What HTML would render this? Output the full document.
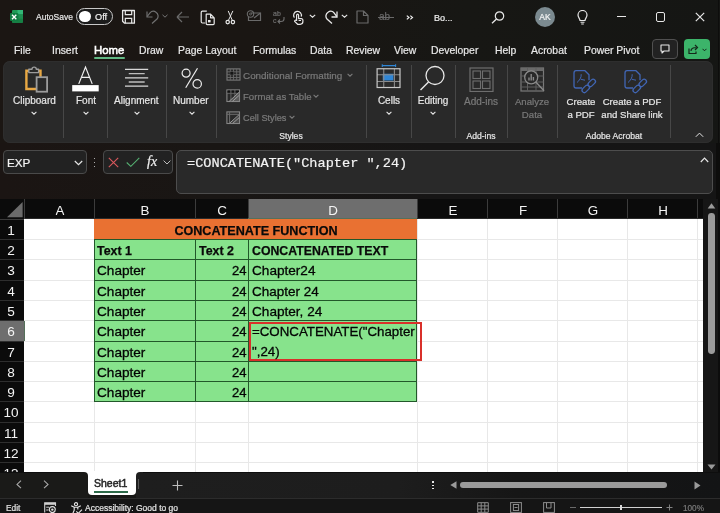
<!DOCTYPE html>
<html><head><meta charset="utf-8">
<style>
*{margin:0;padding:0;box-sizing:border-box}
html,body{width:720px;height:513px;overflow:hidden;background:#171715;font-family:"Liberation Sans",sans-serif;color:#fff}
.a{position:absolute}
.t{position:absolute;white-space:nowrap;line-height:1;will-change:transform;-webkit-text-stroke:0.2px currentColor}
</style></head><body>
<div class="a" style="left:0px;top:0px;width:720px;height:61px;background:linear-gradient(90deg,#1b1613 0%,#1a1613 35%,#171714 65%,#151614 100%)"></div>
<svg class="a" style="left:9px;top:9px" width="16" height="16" viewBox="0 0 16 16" fill="none"><rect x="3" y="1" width="11" height="12.7" rx="1" fill="#1f9a56"/>
<rect x="8.5" y="1" width="5.5" height="4.2" fill="#33b877"/>
<rect x="8.5" y="5.2" width="5.5" height="4.2" fill="#1e8e50"/>
<rect x="3" y="9.4" width="11" height="4.3" rx="1" fill="#168044"/>
<rect x="1" y="3.9" width="8.4" height="8.1" rx="1" fill="#107c41"/>
<path d="M3 5.8 L7.3 10.2 M7.3 5.8 L3 10.2" stroke="#ffffff" stroke-width="1.3"/></svg>
<div class="t" style="left:36px;top:13px;font-size:8.5px;color:#e6e6e6;font-weight:normal;">AutoSave</div>
<div class="a" style="left:76px;top:8px;width:36.5px;height:17.4px;border:1.5px solid #c8c8c8;border-radius:9px;background:#1c1c1c"></div>
<div class="a" style="left:79px;top:10.7px;width:11.6px;height:11.6px;background:#fff;border-radius:50%"></div>
<div class="t" style="left:95px;top:13px;font-size:9.2px;color:#f0f0f0;font-weight:normal;">Off</div>
<svg class="a" style="left:121px;top:9px" width="15" height="16" viewBox="0 0 15 16" fill="none"><path d="M1.6 1.5 H13.4 V14.2 H3.6 L1.6 12.2 Z" stroke="#e8e8e8" stroke-width="1.3" stroke-linejoin="round"/>
<path d="M4.3 1.5 V5.6 H10.7 V1.5" stroke="#e8e8e8" stroke-width="1.2"/>
<path d="M4.3 14.2 V9.4 H10.7 V14.2" stroke="#e8e8e8" stroke-width="1.2"/></svg>
<svg class="a" style="left:145px;top:10px" width="15" height="14" viewBox="0 0 15 14" fill="none"><path d="M7 13.5 L12 9 A4.5 4.5 0 0 0 11 2.3 A4.5 4.5 0 0 0 5 2.8 L2.2 6.5" stroke="#707070" stroke-width="1.2" fill="none"/>
<path d="M2 1.5 V7 H7.5" stroke="#707070" stroke-width="1.2"/></svg>
<svg class="a" style="left:162px;top:14px" width="6" height="4" viewBox="0 0 6 4" fill="none"><path d="M0.5 0.8 L3 3.2 L5.5 0.8" stroke="#777" stroke-width="1"/></svg>
<svg class="a" style="left:176px;top:11px" width="14" height="12" viewBox="0 0 14 12" fill="none"><path d="M1 6 H13 M1 6 L6 1 M1 6 L6 11" stroke="#6a6a6a" stroke-width="1.2"/></svg>
<svg class="a" style="left:199.5px;top:9.5px" width="16" height="16" viewBox="0 0 16 16" fill="none"><path d="M6.8 1.2 H2.4 Q1.2 1.2 1.2 2.4 V11.8 Q1.2 13 2.4 13 H5.2" stroke="#e8e8e8" stroke-width="1.2"/>
<path d="M6.2 4.2 H10.6 L14.2 7.8 V13.6 Q14.2 14.6 13.2 14.6 H7.2 Q6.2 14.6 6.2 13.6 Z M10.6 4.2 V7.8 H14.2" stroke="#e8e8e8" stroke-width="1.2" stroke-linejoin="round"/>
<rect x="8" y="10" width="2.6" height="2.4" fill="#e8e8e8"/></svg>
<svg class="a" style="left:224px;top:9px" width="12" height="16" viewBox="0 0 12 16" fill="none"><path d="M4.2 1.9 L8.3 11.4 M8.9 1.9 L4.4 11.4" stroke="#e8e8e8" stroke-width="1"/>
<circle cx="3.7" cy="13.1" r="1.7" stroke="#e8e8e8" stroke-width="1.2"/><circle cx="8.9" cy="13.1" r="1.7" stroke="#e8e8e8" stroke-width="1.2"/></svg>
<svg class="a" style="left:246px;top:10px" width="16" height="12" viewBox="0 0 16 12" fill="none"><path d="M5 3 H14.5 V10.5 H2.5 V7" stroke="#6a6a6a" stroke-width="1.2"/>
<path d="M8 8 L14.5 3" stroke="#6a6a6a" stroke-width="1.1"/>
<circle cx="4.5" cy="4" r="3.2" stroke="#6a6a6a" stroke-width="1.1"/><circle cx="4.5" cy="4" r="1" stroke="#6a6a6a" stroke-width="0.9"/></svg>
<div class="t" style="left:272.5px;top:10px;font-size:7px;color:#6e6e6e;font-weight:normal;">ab</div>
<div class="t" style="left:272.5px;top:17px;font-size:7px;color:#6e6e6e;font-weight:normal;">c</div>
<svg class="a" style="left:277px;top:16px" width="8" height="8" viewBox="0 0 8 8" fill="none"><path d="M7 1 V3 C7 5 5.5 5.5 4 5.5 H1 M3 3.5 L1 5.5 L3 7.5" stroke="#6e6e6e" stroke-width="1.1"/></svg>
<svg class="a" style="left:292px;top:9.5px" width="12" height="15" viewBox="0 0 12 15" fill="none"><path d="M2.4 7.6 A3.9 3.9 0 1 1 9.2 6.6" stroke="#e8e8e8" stroke-width="1.2"/>
<path d="M4.6 11 V5.2 A1 1 0 0 1 6.6 5.2 V8.6 H9.3 A1.6 1.6 0 0 1 10.9 10.2 V11.6 A2.7 2.7 0 0 1 8.2 14.3 H5.6 L2.6 11.4 A1.1 1.1 0 0 1 4.6 10.6" stroke="#e8e8e8" stroke-width="1.2" stroke-linejoin="round"/>
<path d="M6.6 10.5 H9" stroke="#e8e8e8" stroke-width="1"/></svg>
<svg class="a" style="left:309px;top:14px" width="7" height="4" viewBox="0 0 7 4" fill="none"><path d="M0.8 0.8 L3.5 3.2 L6.2 0.8" stroke="#e8e8e8" stroke-width="1.1"/></svg>
<svg class="a" style="left:324px;top:10px" width="15" height="14" viewBox="0 0 15 14" fill="none"><path d="M8 13.5 L3 9 A4.5 4.5 0 0 1 4 2.3 A4.5 4.5 0 0 1 10 2.8 L12.8 6.5" stroke="#e8e8e8" stroke-width="1.3" fill="none"/>
<path d="M13 1.5 V7 H7.5" stroke="#e8e8e8" stroke-width="1.3"/></svg>
<svg class="a" style="left:341px;top:14px" width="7" height="4" viewBox="0 0 7 4" fill="none"><path d="M0.8 0.8 L3.5 3.2 L6.2 0.8" stroke="#e8e8e8" stroke-width="1.1"/></svg>
<svg class="a" style="left:356px;top:10px" width="13" height="14" viewBox="0 0 13 14" fill="none"><path d="M1 1 H7.5 L12 5.5 V13 H1 Z M7.5 1 V5.5 H12" stroke="#6a6a6a" stroke-width="1.2" stroke-linejoin="round"/></svg>
<div class="t" style="left:379px;top:12px;font-size:10px;color:#6a6a6a;font-weight:normal;">ab</div>
<div class="a" style="left:378px;top:16.5px;width:16px;height:1px;background:#6a6a6a"></div>
<svg class="a" style="left:406px;top:15px" width="8" height="5" viewBox="0 0 8 5" fill="none"><path d="M0.8 0.6 L3 2.5 L0.8 4.4 M4.3 0.6 L6.5 2.5 L4.3 4.4" stroke="#eeeeee" stroke-width="1.2"/></svg>
<div class="t" style="left:434px;top:14px;font-size:9px;color:#f0f0f0;font-weight:normal;">Bo...</div>
<svg class="a" style="left:491px;top:11px" width="14" height="13" viewBox="0 0 14 13" fill="none"><circle cx="8.5" cy="5" r="4.2" stroke="#e8e8e8" stroke-width="1.2"/><path d="M5.5 8 L1 12.3" stroke="#e8e8e8" stroke-width="1.3"/></svg>
<div class="a" style="left:534.5px;top:7px;width:20px;height:20px;background:#7b8a90;border-radius:50%"></div>
<div class="t" style="left:544.5px;transform:translateX(-50%);top:13px;font-size:8.5px;color:#f4f4f4;font-weight:normal;">AK</div>
<svg class="a" style="left:577px;top:10px" width="11" height="15" viewBox="0 0 11 15" fill="none"><path d="M3 10.5 C3 8.5 1 7.5 1 5 A4.5 4.5 0 0 1 10 5 C10 7.5 8 8.5 8 10.5 Z" stroke="#e8e8e8" stroke-width="1.2"/><path d="M3.5 12.3 H7.5 M4.2 14 H6.8" stroke="#e8e8e8" stroke-width="1.1"/></svg>
<div class="a" style="left:616.5px;top:16.3px;width:9px;height:1.2px;background:#e8e8e8"></div>
<div class="a" style="left:655.5px;top:12.2px;width:9.5px;height:9.5px;border:1.2px solid #e8e8e8;border-radius:2px"></div>
<svg class="a" style="left:695px;top:12px" width="10" height="10" viewBox="0 0 10 10" fill="none"><path d="M0.8 0.8 L9.2 9.2 M9.2 0.8 L0.8 9.2" stroke="#e8e8e8" stroke-width="1.2"/></svg>
<div class="t" style="left:14.4px;top:46px;font-size:10.4px;color:#e8e8e8;font-weight:normal;">File</div>
<div class="t" style="left:52.2px;top:46px;font-size:10.4px;color:#e8e8e8;font-weight:normal;">Insert</div>
<div class="t" style="left:138.5px;top:46px;font-size:10.4px;color:#e8e8e8;font-weight:normal;">Draw</div>
<div class="t" style="left:178px;top:46px;font-size:10.4px;color:#e8e8e8;font-weight:normal;">Page Layout</div>
<div class="t" style="left:252.5px;top:46px;font-size:10.4px;color:#e8e8e8;font-weight:normal;">Formulas</div>
<div class="t" style="left:310px;top:46px;font-size:10.4px;color:#e8e8e8;font-weight:normal;">Data</div>
<div class="t" style="left:346px;top:46px;font-size:10.4px;color:#e8e8e8;font-weight:normal;">Review</div>
<div class="t" style="left:393.7px;top:46px;font-size:10.4px;color:#e8e8e8;font-weight:normal;">View</div>
<div class="t" style="left:431.2px;top:46px;font-size:10.4px;color:#e8e8e8;font-weight:normal;">Developer</div>
<div class="t" style="left:495px;top:46px;font-size:10.4px;color:#e8e8e8;font-weight:normal;">Help</div>
<div class="t" style="left:531px;top:46px;font-size:10.4px;color:#e8e8e8;font-weight:normal;">Acrobat</div>
<div class="t" style="left:583.7px;top:46px;font-size:10.4px;color:#e8e8e8;font-weight:normal;">Power Pivot</div>
<div class="t" style="left:93.8px;top:45px;font-size:11.4px;color:#ffffff;font-weight:normal;-webkit-text-stroke:0.55px #ffffff;">Home</div>
<div class="a" style="left:93.8px;top:56.5px;width:31px;height:2px;background:#62b884;border-radius:1px"></div>
<div class="a" style="left:652px;top:38.9px;width:25.6px;height:20.1px;border:1px solid #505050;border-radius:4px;background:#222"></div>
<svg class="a" style="left:659.5px;top:43.5px" width="10" height="10" viewBox="0 0 10 10" fill="none"><path d="M1 1 H9 V7 H4 L2 9 V7 H1 Z" stroke="#e8e8e8" stroke-width="1.1" stroke-linejoin="round"/></svg>
<div class="a" style="left:683.9px;top:38.9px;width:26.1px;height:20.1px;background:#3cb46a;border-radius:4px"></div>
<svg class="a" style="left:687.5px;top:44px" width="11" height="10" viewBox="0 0 11 10" fill="none"><path d="M1 4.5 V9.5 H8 V7.5" stroke="#15261a" stroke-width="1.2"/><path d="M3 7 C3 4.5 5 3.5 8.5 3.5 M7 1 L9.5 3.5 L7 6" stroke="#15261a" stroke-width="1.2"/></svg>
<svg class="a" style="left:702px;top:47.5px" width="5" height="4" viewBox="0 0 5 4" fill="none"><path d="M0.5 0.8 L2.5 2.8 L4.5 0.8" stroke="#15261a" stroke-width="1"/></svg>
<div class="a" style="left:0px;top:61px;width:720px;height:82px;background:linear-gradient(90deg,#1b1613 0%,#1a1613 35%,#171714 65%,#151614 100%)"></div>
<div class="a" style="left:3px;top:61px;width:710px;height:82px;background:#292929;border-radius:7px;box-shadow:inset 0 0 0 1px #2e2e2e"></div>
<div class="a" style="left:63px;top:65px;width:1px;height:73px;background:#474747"></div>
<div class="a" style="left:107px;top:65px;width:1px;height:73px;background:#474747"></div>
<div class="a" style="left:166px;top:65px;width:1px;height:73px;background:#474747"></div>
<div class="a" style="left:216px;top:65px;width:1px;height:73px;background:#474747"></div>
<div class="a" style="left:366px;top:65px;width:1px;height:73px;background:#474747"></div>
<div class="a" style="left:411px;top:65px;width:1px;height:73px;background:#474747"></div>
<div class="a" style="left:455px;top:65px;width:1px;height:73px;background:#474747"></div>
<div class="a" style="left:507px;top:65px;width:1px;height:73px;background:#474747"></div>
<div class="a" style="left:557px;top:65px;width:1px;height:73px;background:#474747"></div>
<div class="a" style="left:670px;top:65px;width:1px;height:73px;background:#474747"></div>
<svg class="a" style="left:24px;top:65px" width="26" height="28" viewBox="0 0 26 28" fill="none"><path d="M2.4 5.8 H16.5 V24 H2.4 Z" stroke="#e8a844" stroke-width="2.4"/>
<path d="M4.8 7.6 V4.3 H8 A2 2 0 0 1 12.3 4.3 H14.6 V7.6 Z" stroke="#9c9c9c" stroke-width="1.4" fill="#292929" stroke-linejoin="round"/>
<rect x="12.6" y="12.2" width="10.5" height="14.5" fill="#292929" stroke="#9c9c9c" stroke-width="1.8"/></svg>
<div class="t" style="left:13.2px;top:96px;font-size:10px;color:#e6e6e6;font-weight:normal;">Clipboard</div>
<svg class="a" style="left:31px;top:110.5px" width="6" height="4" viewBox="0 0 6 4" fill="none"><path d="M0.6 0.8 L3 3.2 L5.4 0.8" stroke="#e6e6e6" stroke-width="1.1"/></svg>
<svg class="a" style="left:71px;top:65px" width="29" height="27" viewBox="0 0 29 27" fill="none"><path d="M7.75 18.9 L14.5 2 L21.2 18.9 M10.9 12.3 H18.4" stroke="#f0f0f0" stroke-width="1.2"/>
<rect x="1.2" y="20.1" width="26.5" height="6.3" fill="#ffffff"/></svg>
<div class="t" style="left:75.7px;top:96px;font-size:10px;color:#e6e6e6;font-weight:normal;">Font</div>
<svg class="a" style="left:82.5px;top:110.5px" width="6" height="4" viewBox="0 0 6 4" fill="none"><path d="M0.6 0.8 L3 3.2 L5.4 0.8" stroke="#e6e6e6" stroke-width="1.1"/></svg>
<svg class="a" style="left:124px;top:67px" width="26" height="22" viewBox="0 0 26 22" fill="none"><path d="M1 2.4 H24.2 M1 10.8 H24.2 M1 19.1 H24.2" stroke="#d8d8d8" stroke-width="1.3"/><path d="M4.75 6.6 H20.7 M4.75 15 H20.7" stroke="#bdbdbd" stroke-width="1.3"/></svg>
<div class="t" style="left:114.3px;top:96px;font-size:10px;color:#e6e6e6;font-weight:normal;">Alignment</div>
<svg class="a" style="left:134px;top:110.5px" width="6" height="4" viewBox="0 0 6 4" fill="none"><path d="M0.6 0.8 L3 3.2 L5.4 0.8" stroke="#e6e6e6" stroke-width="1.1"/></svg>
<svg class="a" style="left:180px;top:67px" width="24" height="22" viewBox="0 0 24 22" fill="none"><circle cx="6.1" cy="6.2" r="4" stroke="#eeeeee" stroke-width="1.2"/><circle cx="17.2" cy="16.9" r="4.2" stroke="#eeeeee" stroke-width="1.2"/><path d="M17.5 1.3 L5.7 20.8" stroke="#eeeeee" stroke-width="1.2"/></svg>
<div class="t" style="left:173.3px;top:96px;font-size:10px;color:#e6e6e6;font-weight:normal;">Number</div>
<svg class="a" style="left:188.5px;top:110.5px" width="6" height="4" viewBox="0 0 6 4" fill="none"><path d="M0.6 0.8 L3 3.2 L5.4 0.8" stroke="#e6e6e6" stroke-width="1.1"/></svg>
<svg class="a" style="left:225.5px;top:68px" width="15" height="13" viewBox="0 0 15 13" fill="none"><rect x="1" y="0.9" width="13" height="11.2" stroke="#7a7a7a" stroke-width="1.1"/><path d="M1 3.8 H14 M1 6.7 H14 M1 9.5 H14 M4.3 1 V12 M7.5 1 V12 M10.7 1 V12" stroke="#6a6a6a" stroke-width="0.9"/><rect x="4.3" y="3.8" width="3.2" height="2.9" fill="#151515"/></svg>
<div class="t" style="left:243.3px;top:71px;font-size:9.9px;color:#7a7a7a;font-weight:normal;">Conditional Formatting</div>
<svg class="a" style="left:346.9px;top:72.5px" width="6" height="4" viewBox="0 0 6 4" fill="none"><path d="M0.6 0.8 L3 3.2 L5.4 0.8" stroke="#7a7a7a" stroke-width="1.1"/></svg>
<svg class="a" style="left:226px;top:89px" width="15" height="14" viewBox="0 0 15 14" fill="none"><rect x="0.9" y="0.9" width="12.6" height="11.6" stroke="#858585" stroke-width="1.1"/><rect x="1.5" y="1.5" width="3" height="2.5" fill="#111"/><rect x="5.3" y="1.5" width="3.2" height="2.5" fill="#111"/><rect x="9.3" y="1.5" width="3.6" height="2.5" fill="#111"/><path d="M1 4.3 H13.5 M4.9 1 V12.5 M8.9 1 V7" stroke="#6a6a6a" stroke-width="0.9"/><path d="M3.5 12 L13 3.5 V12 Z" fill="#5a5a5a"/><path d="M3.2 12.3 L13.2 3.2 M6.5 12.3 L13.2 6.3" stroke="#9a9a9a" stroke-width="1"/></svg>
<div class="t" style="left:243.3px;top:92px;font-size:9.6px;color:#7a7a7a;font-weight:normal;">Format as Table</div>
<svg class="a" style="left:313.4px;top:94px" width="6" height="4" viewBox="0 0 6 4" fill="none"><path d="M0.6 0.8 L3 3.2 L5.4 0.8" stroke="#7a7a7a" stroke-width="1.1"/></svg>
<svg class="a" style="left:226px;top:110.5px" width="15" height="14" viewBox="0 0 15 14" fill="none"><rect x="0.9" y="0.9" width="12.6" height="11.6" stroke="#858585" stroke-width="1.1"/><path d="M1 3.3 H13.5 M3.6 1 V12.5" stroke="#6e6e6e" stroke-width="1"/><path d="M4.5 12 L13 4.5 V12 Z" fill="#4a4a4a"/><path d="M3.5 12.3 L13.2 3.6 M6.8 12.3 L13.2 6.6" stroke="#9a9a9a" stroke-width="1"/></svg>
<div class="t" style="left:243.3px;top:114px;font-size:9.2px;color:#7a7a7a;font-weight:normal;">Cell Styles</div>
<svg class="a" style="left:288.5px;top:115.2px" width="6" height="4" viewBox="0 0 6 4" fill="none"><path d="M0.6 0.8 L3 3.2 L5.4 0.8" stroke="#7a7a7a" stroke-width="1.1"/></svg>
<div class="t" style="left:291px;transform:translateX(-50%);top:132px;font-size:8.6px;color:#e6e6e6;font-weight:normal;">Styles</div>
<svg class="a" style="left:376px;top:64px" width="26" height="25" viewBox="0 0 26 25" fill="none"><rect x="6.75" y="9.75" width="10.65" height="6.75" fill="#2f86d6"/>
<path d="M1 10.75 H24 M1 17.5 H24 M7.75 4.75 V23.5 M18.4 4.75 V23.5" stroke="#8a8a8a" stroke-width="1.1"/>
<rect x="1.1" y="4.75" width="22.9" height="18.75" stroke="#c8c8c8" stroke-width="1.2"/>
<path d="M6.25 1.6 H19.6 M6.25 0.3 V2.9 M19.6 0.3 V2.9" stroke="#2f86d6" stroke-width="1.1"/></svg>
<div class="t" style="left:388.8px;transform:translateX(-50%);top:96px;font-size:10px;color:#e6e6e6;font-weight:normal;">Cells</div>
<svg class="a" style="left:385.8px;top:110.5px" width="6" height="4" viewBox="0 0 6 4" fill="none"><path d="M0.6 0.8 L3 3.2 L5.4 0.8" stroke="#e6e6e6" stroke-width="1.1"/></svg>
<svg class="a" style="left:419px;top:65px" width="27" height="26" viewBox="0 0 27 26" fill="none"><circle cx="16" cy="10.5" r="9" stroke="#e8e8e8" stroke-width="1.3"/><path d="M9.5 17 L1.5 25" stroke="#e8e8e8" stroke-width="1.5"/></svg>
<div class="t" style="left:432.5px;transform:translateX(-50%);top:96px;font-size:10px;color:#e6e6e6;font-weight:normal;">Editing</div>
<svg class="a" style="left:429.5px;top:110.5px" width="6" height="4" viewBox="0 0 6 4" fill="none"><path d="M0.6 0.8 L3 3.2 L5.4 0.8" stroke="#e6e6e6" stroke-width="1.1"/></svg>
<svg class="a" style="left:469px;top:67px" width="25" height="25" viewBox="0 0 25 25" fill="none"><rect x="1" y="1" width="23" height="23.5" stroke="#6e6e6e" stroke-width="1.2"/><rect x="4" y="4" width="7.5" height="7.5" stroke="#6e6e6e" stroke-width="1.1"/><rect x="13.5" y="4" width="7.5" height="7.5" stroke="#6e6e6e" stroke-width="1.1"/><rect x="4" y="14" width="7.5" height="7.5" stroke="#6e6e6e" stroke-width="1.1"/><rect x="13.5" y="14" width="7.5" height="7.5" stroke="#6e6e6e" stroke-width="1.1"/></svg>
<div class="t" style="left:481px;transform:translateX(-50%);top:97px;font-size:10px;color:#7a7a7a;font-weight:normal;">Add-ins</div>
<div class="t" style="left:481px;transform:translateX(-50%);top:132px;font-size:8.6px;color:#e6e6e6;font-weight:normal;">Add-ins</div>
<svg class="a" style="left:520px;top:67px" width="26" height="26" viewBox="0 0 26 26" fill="none"><rect x="1" y="1" width="22.5" height="23" stroke="#7a7a7a" stroke-width="1.2"/>
<rect x="1" y="1" width="22.5" height="3" fill="#6a6a6a"/>
<path d="M1 9 H23.5 M1 15 H23.5 M1 20 H23.5 M7.5 1 V24 M16 1 V24" stroke="#5e5e5e" stroke-width="1"/>
<circle cx="11.2" cy="10.4" r="6.5" fill="#292929" stroke="#8a8a8a" stroke-width="1.3"/>
<path d="M9 13.5 V10.5 M11.2 13.5 V7 M13.4 13.5 V10" stroke="#8a8a8a" stroke-width="1.4"/>
<path d="M15.8 15 L24 23.8" stroke="#8a8a8a" stroke-width="1.4"/></svg>
<div class="t" style="left:532px;transform:translateX(-50%);top:97px;font-size:9.6px;color:#7a7a7a;font-weight:normal;">Analyze</div>
<div class="t" style="left:532px;transform:translateX(-50%);top:110px;font-size:9.6px;color:#7a7a7a;font-weight:normal;">Data</div>
<svg class="a" style="left:572px;top:69px" width="26" height="26" viewBox="0 0 26 26" fill="none"><path d="M10 19 H4 Q2 19 2 17 V4 Q2 1.7 4 1.7 H13 L17 5.8 V11.3" stroke="#4166b4" stroke-width="1.3" stroke-linejoin="round"/>
<path d="M9.2 5.2 C9.5 8.5 7.5 11.5 5 13.5 M8.8 10.2 C10.2 10.8 11.8 10.8 13 11.2" stroke="#4166b4" stroke-width="1"/>
<rect x="9.5" y="17.6" width="8.5" height="4.6" rx="2.3" transform="rotate(-45 13.75 19.9)" stroke="#4166b4" stroke-width="1.3"/>
<rect x="15.5" y="11.6" width="8.5" height="4.6" rx="2.3" transform="rotate(-45 19.75 13.9)" stroke="#4166b4" stroke-width="1.3"/></svg>
<div class="t" style="left:581px;transform:translateX(-50%);top:97px;font-size:9.6px;color:#e6e6e6;font-weight:normal;">Create</div>
<div class="t" style="left:581px;transform:translateX(-50%);top:110px;font-size:9.6px;color:#e6e6e6;font-weight:normal;">a PDF</div>
<svg class="a" style="left:623px;top:69px" width="26" height="26" viewBox="0 0 26 26" fill="none"><path d="M10 19 H4 Q2 19 2 17 V4 Q2 1.7 4 1.7 H13 L17 5.8 V11.3" stroke="#4166b4" stroke-width="1.3" stroke-linejoin="round"/>
<path d="M9.2 5.2 C9.5 8.5 7.5 11.5 5 13.5 M8.8 10.2 C10.2 10.8 11.8 10.8 13 11.2" stroke="#4166b4" stroke-width="1"/>
<rect x="9.5" y="17.6" width="8.5" height="4.6" rx="2.3" transform="rotate(-45 13.75 19.9)" stroke="#4166b4" stroke-width="1.3"/>
<rect x="15.5" y="11.6" width="8.5" height="4.6" rx="2.3" transform="rotate(-45 19.75 13.9)" stroke="#4166b4" stroke-width="1.3"/></svg>
<div class="t" style="left:632px;transform:translateX(-50%);top:97px;font-size:9.6px;color:#e6e6e6;font-weight:normal;">Create a PDF</div>
<div class="t" style="left:632px;transform:translateX(-50%);top:110px;font-size:9.6px;color:#e6e6e6;font-weight:normal;">and Share link</div>
<div class="t" style="left:614px;transform:translateX(-50%);top:132px;font-size:8.6px;color:#e6e6e6;font-weight:normal;">Adobe Acrobat</div>
<svg class="a" style="left:694.5px;top:132px" width="9" height="6" viewBox="0 0 9 6" fill="none"><path d="M0.8 4.8 L4.5 1.1 L8.2 4.8" stroke="#e6e6e6" stroke-width="1"/></svg>
<div class="a" style="left:0px;top:143px;width:720px;height:55.5px;background:linear-gradient(90deg,#1b1513,#191614 30%,#161515 60%,#151515)"></div>
<div class="a" style="left:3px;top:150px;width:84px;height:24px;border:1px solid #4a4a4a;border-radius:4px;background:#222222"></div>
<div class="t" style="left:7px;top:157px;font-size:11.7px;color:#f4f4f4;font-weight:normal;">EXP</div>
<svg class="a" style="left:73.5px;top:159.5px" width="9" height="6" viewBox="0 0 9 6" fill="none"><path d="M0.8 1 L4.5 4.6 L8.2 1" stroke="#e6e6e6" stroke-width="1.2"/></svg>
<div class="a" style="left:93.8px;top:157.5px;width:1.6px;height:1.6px;background:#e0e0e0;border-radius:50%"></div>
<div class="a" style="left:93.8px;top:161.5px;width:1.6px;height:1.6px;background:#e0e0e0;border-radius:50%"></div>
<div class="a" style="left:93.8px;top:165.5px;width:1.6px;height:1.6px;background:#e0e0e0;border-radius:50%"></div>
<div class="a" style="left:103px;top:150px;width:70px;height:24px;border:1px solid #4a4a4a;border-radius:4px;background:#222222"></div>
<svg class="a" style="left:108px;top:156.5px" width="11" height="11" viewBox="0 0 11 11" fill="none"><path d="M0.8 0.8 L10.2 10.2 M10.2 0.8 L0.8 10.2" stroke="#d9585c" stroke-width="1.1"/></svg>
<svg class="a" style="left:126px;top:156.5px" width="14" height="10" viewBox="0 0 14 10" fill="none"><path d="M0.7 5.5 L4.8 9.3 L13.3 0.8" stroke="#55b072" stroke-width="1.1"/></svg>
<div class="t" style="left:147px;top:155px;font-size:14px;color:#f0f0f0;font-weight:normal;font-family:'Liberation Serif',serif;"><i>fx</i></div>
<svg class="a" style="left:163.3px;top:159.5px" width="8" height="5" viewBox="0 0 8 5" fill="none"><path d="M0.6 0.6 L4 4 L7.4 0.6" stroke="#bdbdbd" stroke-width="1"/></svg>
<div class="a" style="left:176px;top:150px;width:537px;height:44px;border:1px solid #4d4d4d;border-radius:5px;background:#292929"></div>
<div class="t" style="left:186.5px;top:157px;font-size:13.6px;color:#f4f4f4;font-weight:normal;font-family:'Liberation Mono',monospace;">=CONCATENATE("Chapter ",24)</div>
<svg class="a" style="left:700px;top:157px" width="9" height="6" viewBox="0 0 9 6" fill="none"><path d="M0.8 5 L4.5 1.2 L8.2 5" stroke="#e6e6e6" stroke-width="1.2"/></svg>
<div class="a" style="left:716px;top:142.5px;width:4px;height:56px;background:#0d0d0c"></div>
<div class="a" style="left:718px;top:0px;width:1px;height:142.5px;background:#0d0d0c"></div>
<div class="a" style="left:0px;top:198.5px;width:720px;height:274px;background:#0b0b0b"></div>
<div class="a" style="left:24px;top:219px;width:679px;height:253px;background:#ffffff"></div>
<div class="a" style="left:248px;top:199px;width:169px;height:20px;background:#6e6e6e"></div>
<div class="a" style="left:94px;top:199px;width:1px;height:20px;background:#3c3c3c"></div>
<div class="a" style="left:195px;top:199px;width:1px;height:20px;background:#3c3c3c"></div>
<div class="a" style="left:248px;top:199px;width:1px;height:20px;background:#3c3c3c"></div>
<div class="a" style="left:417px;top:199px;width:1px;height:20px;background:#3c3c3c"></div>
<div class="a" style="left:487px;top:199px;width:1px;height:20px;background:#3c3c3c"></div>
<div class="a" style="left:557px;top:199px;width:1px;height:20px;background:#3c3c3c"></div>
<div class="a" style="left:627px;top:199px;width:1px;height:20px;background:#3c3c3c"></div>
<div class="a" style="left:697px;top:199px;width:1px;height:20px;background:#3c3c3c"></div>
<div class="a" style="left:24px;top:218px;width:679px;height:1px;background:#2a2a2a"></div>
<div class="a" style="left:248px;top:218px;width:169px;height:1.2px;background:#56705a"></div>
<div class="t" style="left:59.5px;transform:translateX(-50%);top:204px;font-size:13.4px;color:#f4f4f4;font-weight:normal;-webkit-text-stroke:0;">A</div>
<div class="t" style="left:145.0px;transform:translateX(-50%);top:204px;font-size:13.4px;color:#f4f4f4;font-weight:normal;-webkit-text-stroke:0;">B</div>
<div class="t" style="left:222.0px;transform:translateX(-50%);top:204px;font-size:13.4px;color:#f4f4f4;font-weight:normal;-webkit-text-stroke:0;">C</div>
<div class="t" style="left:333.0px;transform:translateX(-50%);top:204px;font-size:13.4px;color:#f4f4f4;font-weight:normal;-webkit-text-stroke:0;">D</div>
<div class="t" style="left:452.5px;transform:translateX(-50%);top:204px;font-size:13.4px;color:#f4f4f4;font-weight:normal;-webkit-text-stroke:0;">E</div>
<div class="t" style="left:522.5px;transform:translateX(-50%);top:204px;font-size:13.4px;color:#f4f4f4;font-weight:normal;-webkit-text-stroke:0;">F</div>
<div class="t" style="left:592.5px;transform:translateX(-50%);top:204px;font-size:13.4px;color:#f4f4f4;font-weight:normal;-webkit-text-stroke:0;">G</div>
<div class="t" style="left:662.5px;transform:translateX(-50%);top:204px;font-size:13.4px;color:#f4f4f4;font-weight:normal;-webkit-text-stroke:0;">H</div>
<svg class="a" style="left:7px;top:202px" width="16" height="16" viewBox="0 0 16 16" fill="none"><path d="M15.6 0 V15.2 H0 Z" fill="#6b6b6b"/></svg>
<div class="a" style="left:24px;top:199px;width:1px;height:20px;background:#3c3c3c"></div>
<div class="a" style="left:0px;top:219px;width:24px;height:253px;background:#0b0b0b"></div>
<div class="a" style="left:0px;top:218.6px;width:24px;height:1px;background:#3a3a3a"></div>
<div class="a" style="left:0px;top:320px;width:24px;height:21.5px;background:#6e6e6e"></div>
<div class="a" style="left:23.5px;top:320px;width:1px;height:21.5px;background:#55705a"></div>
<div class="a" style="left:0px;top:239px;width:24px;height:1px;background:#2e2e2e"></div>
<div class="t" style="left:10.6px;transform:translateX(-50%);top:224px;font-size:13.6px;color:#f4f4f4;font-weight:normal;-webkit-text-stroke:0;">1</div>
<div class="a" style="left:0px;top:259px;width:24px;height:1px;background:#2e2e2e"></div>
<div class="t" style="left:10.6px;transform:translateX(-50%);top:244px;font-size:13.6px;color:#f4f4f4;font-weight:normal;-webkit-text-stroke:0;">2</div>
<div class="a" style="left:0px;top:280px;width:24px;height:1px;background:#2e2e2e"></div>
<div class="t" style="left:10.6px;transform:translateX(-50%);top:264px;font-size:13.6px;color:#f4f4f4;font-weight:normal;-webkit-text-stroke:0;">3</div>
<div class="a" style="left:0px;top:300px;width:24px;height:1px;background:#2e2e2e"></div>
<div class="t" style="left:10.6px;transform:translateX(-50%);top:285px;font-size:13.6px;color:#f4f4f4;font-weight:normal;-webkit-text-stroke:0;">4</div>
<div class="a" style="left:0px;top:320px;width:24px;height:1px;background:#2e2e2e"></div>
<div class="t" style="left:10.6px;transform:translateX(-50%);top:305px;font-size:13.6px;color:#f4f4f4;font-weight:normal;-webkit-text-stroke:0;">5</div>
<div class="a" style="left:0px;top:341px;width:24px;height:1px;background:#2e2e2e"></div>
<div class="t" style="left:10.6px;transform:translateX(-50%);top:325px;font-size:13.6px;color:#f4f4f4;font-weight:normal;-webkit-text-stroke:0;">6</div>
<div class="a" style="left:0px;top:361px;width:24px;height:1px;background:#2e2e2e"></div>
<div class="t" style="left:10.6px;transform:translateX(-50%);top:346px;font-size:13.6px;color:#f4f4f4;font-weight:normal;-webkit-text-stroke:0;">7</div>
<div class="a" style="left:0px;top:381px;width:24px;height:1px;background:#2e2e2e"></div>
<div class="t" style="left:10.6px;transform:translateX(-50%);top:366px;font-size:13.6px;color:#f4f4f4;font-weight:normal;-webkit-text-stroke:0;">8</div>
<div class="a" style="left:0px;top:401px;width:24px;height:1px;background:#2e2e2e"></div>
<div class="t" style="left:10.6px;transform:translateX(-50%);top:386px;font-size:13.6px;color:#f4f4f4;font-weight:normal;-webkit-text-stroke:0;">9</div>
<div class="a" style="left:0px;top:422px;width:24px;height:1px;background:#2e2e2e"></div>
<div class="t" style="left:10.6px;transform:translateX(-50%);top:406px;font-size:13.6px;color:#f4f4f4;font-weight:normal;-webkit-text-stroke:0;">10</div>
<div class="a" style="left:0px;top:442px;width:24px;height:1px;background:#2e2e2e"></div>
<div class="t" style="left:10.6px;transform:translateX(-50%);top:427px;font-size:13.6px;color:#f4f4f4;font-weight:normal;-webkit-text-stroke:0;">11</div>
<div class="a" style="left:0px;top:462px;width:24px;height:1px;background:#2e2e2e"></div>
<div class="t" style="left:10.6px;transform:translateX(-50%);top:447px;font-size:13.6px;color:#f4f4f4;font-weight:normal;-webkit-text-stroke:0;">12</div>
<div class="t" style="left:10.6px;transform:translateX(-50%);top:467px;font-size:13.6px;color:#f4f4f4;font-weight:normal;-webkit-text-stroke:0;">13</div>
<div class="a" style="left:94px;top:219px;width:1px;height:253px;background:#e8e8e8"></div>
<div class="a" style="left:195px;top:219px;width:1px;height:253px;background:#e8e8e8"></div>
<div class="a" style="left:248px;top:219px;width:1px;height:253px;background:#e8e8e8"></div>
<div class="a" style="left:417px;top:219px;width:1px;height:253px;background:#e8e8e8"></div>
<div class="a" style="left:487px;top:219px;width:1px;height:253px;background:#e8e8e8"></div>
<div class="a" style="left:557px;top:219px;width:1px;height:253px;background:#e8e8e8"></div>
<div class="a" style="left:627px;top:219px;width:1px;height:253px;background:#e8e8e8"></div>
<div class="a" style="left:697px;top:219px;width:1px;height:253px;background:#e8e8e8"></div>
<div class="a" style="left:24px;top:239px;width:679px;height:1px;background:#e8e8e8"></div>
<div class="a" style="left:24px;top:259px;width:679px;height:1px;background:#e8e8e8"></div>
<div class="a" style="left:24px;top:280px;width:679px;height:1px;background:#e8e8e8"></div>
<div class="a" style="left:24px;top:300px;width:679px;height:1px;background:#e8e8e8"></div>
<div class="a" style="left:24px;top:320px;width:679px;height:1px;background:#e8e8e8"></div>
<div class="a" style="left:24px;top:341px;width:679px;height:1px;background:#e8e8e8"></div>
<div class="a" style="left:24px;top:361px;width:679px;height:1px;background:#e8e8e8"></div>
<div class="a" style="left:24px;top:381px;width:679px;height:1px;background:#e8e8e8"></div>
<div class="a" style="left:24px;top:401px;width:679px;height:1px;background:#e8e8e8"></div>
<div class="a" style="left:24px;top:422px;width:679px;height:1px;background:#e8e8e8"></div>
<div class="a" style="left:24px;top:442px;width:679px;height:1px;background:#e8e8e8"></div>
<div class="a" style="left:24px;top:462px;width:679px;height:1px;background:#e8e8e8"></div>
<div class="a" style="left:94px;top:219px;width:323px;height:20px;background:#e97132"></div>
<div class="a" style="left:94px;top:239px;width:323px;height:162px;background:#87e38c"></div>
<div class="a" style="left:94px;top:239px;width:1px;height:163px;background:#22582a"></div>
<div class="a" style="left:195px;top:239px;width:1px;height:163px;background:#22582a"></div>
<div class="a" style="left:248px;top:239px;width:1px;height:163px;background:#22582a"></div>
<div class="a" style="left:416px;top:239px;width:1px;height:163px;background:#22582a"></div>
<div class="a" style="left:94px;top:239px;width:323px;height:1px;background:#22582a"></div>
<div class="a" style="left:94px;top:259px;width:323px;height:1px;background:#22582a"></div>
<div class="a" style="left:94px;top:280px;width:323px;height:1px;background:#22582a"></div>
<div class="a" style="left:94px;top:300px;width:323px;height:1px;background:#22582a"></div>
<div class="a" style="left:94px;top:320px;width:323px;height:1px;background:#22582a"></div>
<div class="a" style="left:94px;top:341px;width:323px;height:1px;background:#22582a"></div>
<div class="a" style="left:94px;top:361px;width:323px;height:1px;background:#22582a"></div>
<div class="a" style="left:94px;top:381px;width:323px;height:1px;background:#22582a"></div>
<div class="a" style="left:94px;top:401px;width:323px;height:1px;background:#22582a"></div>
<div class="t" style="left:255.5px;transform:translateX(-50%);top:225px;font-size:12.6px;color:#0a0a0a;font-weight:bold;-webkit-text-stroke:0.25px #0a0a0a;">CONCATENATE FUNCTION</div>
<div class="t" style="left:97.4px;top:245px;font-size:12.4px;color:#0a0a0a;font-weight:bold;-webkit-text-stroke:0.25px #0a0a0a;">Text 1</div>
<div class="t" style="left:198.5px;top:245px;font-size:12.4px;color:#0a0a0a;font-weight:bold;-webkit-text-stroke:0.25px #0a0a0a;">Text 2</div>
<div class="t" style="left:252px;top:245px;font-size:12.3px;color:#0a0a0a;font-weight:bold;-webkit-text-stroke:0.25px #0a0a0a;">CONCATENATED TEXT</div>
<div class="t" style="left:97.2px;top:264px;font-size:13.6px;color:#050505;font-weight:normal;-webkit-text-stroke:0.3px #050505;">Chapter</div>
<div class="t" style="right:473.7px;top:264px;font-size:13.1px;color:#050505;font-weight:normal;-webkit-text-stroke:0.3px #050505;">24</div>
<div class="t" style="left:97.2px;top:285px;font-size:13.6px;color:#050505;font-weight:normal;-webkit-text-stroke:0.3px #050505;">Chapter</div>
<div class="t" style="right:473.7px;top:285px;font-size:13.1px;color:#050505;font-weight:normal;-webkit-text-stroke:0.3px #050505;">24</div>
<div class="t" style="left:97.2px;top:305px;font-size:13.6px;color:#050505;font-weight:normal;-webkit-text-stroke:0.3px #050505;">Chapter</div>
<div class="t" style="right:473.7px;top:305px;font-size:13.1px;color:#050505;font-weight:normal;-webkit-text-stroke:0.3px #050505;">24</div>
<div class="t" style="left:97.2px;top:325px;font-size:13.6px;color:#050505;font-weight:normal;-webkit-text-stroke:0.3px #050505;">Chapter</div>
<div class="t" style="right:473.7px;top:325px;font-size:13.1px;color:#050505;font-weight:normal;-webkit-text-stroke:0.3px #050505;">24</div>
<div class="t" style="left:97.2px;top:346px;font-size:13.6px;color:#050505;font-weight:normal;-webkit-text-stroke:0.3px #050505;">Chapter</div>
<div class="t" style="right:473.7px;top:346px;font-size:13.1px;color:#050505;font-weight:normal;-webkit-text-stroke:0.3px #050505;">24</div>
<div class="t" style="left:97.2px;top:366px;font-size:13.6px;color:#050505;font-weight:normal;-webkit-text-stroke:0.3px #050505;">Chapter</div>
<div class="t" style="right:473.7px;top:366px;font-size:13.1px;color:#050505;font-weight:normal;-webkit-text-stroke:0.3px #050505;">24</div>
<div class="t" style="left:97.2px;top:386px;font-size:13.6px;color:#050505;font-weight:normal;-webkit-text-stroke:0.3px #050505;">Chapter</div>
<div class="t" style="right:473.7px;top:386px;font-size:13.1px;color:#050505;font-weight:normal;-webkit-text-stroke:0.3px #050505;">24</div>
<div class="t" style="left:252px;top:264px;font-size:13.6px;color:#050505;font-weight:normal;-webkit-text-stroke:0.3px #050505;">Chapter24</div>
<div class="t" style="left:252px;top:285px;font-size:13.5px;color:#050505;font-weight:normal;-webkit-text-stroke:0.3px #050505;">Chapter 24</div>
<div class="t" style="left:252px;top:305px;font-size:13.6px;color:#050505;font-weight:normal;-webkit-text-stroke:0.3px #050505;">Chapter, 24</div>
<div class="a" style="left:249px;top:323px;width:167px;height:37px;background:#87e38c"></div>
<div class="a" style="left:248.5px;top:322.3px;width:173.5px;height:38.5px;border:2.3px solid #d9302a"></div>
<div class="t" style="left:251.5px;top:325px;font-size:13.3px;color:#050505;font-weight:normal;-webkit-text-stroke:0.3px #050505;">=CONCATENATE("Chapter</div>
<div class="t" style="left:251.5px;top:345px;font-size:13.3px;color:#050505;font-weight:normal;-webkit-text-stroke:0.3px #050505;">",24)</div>
<div class="a" style="left:703px;top:198.5px;width:17px;height:274px;background:#161616"></div>
<div class="a" style="left:717.5px;top:198.5px;width:2.5px;height:274px;background:#0c0c0c"></div>
<svg class="a" style="left:707px;top:203px" width="9" height="6" viewBox="0 0 9 6" fill="none"><path d="M4.5 0.3 L8.3 5.5 H0.7 Z" fill="#9a9a9a"/></svg>
<div class="a" style="left:708px;top:213px;width:6.8px;height:141px;background:#9a9a9a;border-radius:3.4px"></div>
<svg class="a" style="left:707px;top:463.5px" width="9" height="6" viewBox="0 0 9 6" fill="none"><path d="M0.5 0.5 H8.5 L4.5 5.5 Z" fill="#9a9a9a"/></svg>
<div class="a" style="left:80px;top:471px;width:63px;height:8px;background:#ffffff"></div>
<div class="a" style="left:0px;top:472px;width:87.5px;height:26px;background:#1a1a18;border-top-right-radius:4px"></div>
<div class="a" style="left:136px;top:472px;width:584px;height:26px;background:linear-gradient(90deg,#1e1e1e 0%,#1d1d1d 45%,#161616 65%,#131415 100%);border-top-left-radius:4px"></div>
<div class="a" style="left:0px;top:472px;width:80px;height:1px;background:#0e0e0e"></div>
<div class="a" style="left:143px;top:472px;width:577px;height:1px;background:#0e0e0e"></div>
<div class="a" style="left:87.5px;top:472px;width:48.5px;height:23px;background:#ffffff;border-radius:0 0 4px 4px"></div>
<svg class="a" style="left:15.5px;top:480px" width="6" height="9" viewBox="0 0 6 9" fill="none"><path d="M5 0.6 L1 4.4 L5 8.2" stroke="#aaaaaa" stroke-width="1.1"/></svg>
<svg class="a" style="left:42.5px;top:480px" width="6" height="9" viewBox="0 0 6 9" fill="none"><path d="M1 0.6 L5 4.4 L1 8.2" stroke="#aaaaaa" stroke-width="1.1"/></svg>
<div class="t" style="left:94.2px;top:478px;font-size:10.5px;color:#262626;font-weight:normal;-webkit-text-stroke:0.5px #262626;">Sheet1</div>
<div class="a" style="left:94px;top:491.2px;width:34px;height:1.6px;background:#2e6b4a"></div>
<div class="a" style="left:138px;top:479px;width:1px;height:10px;background:#555"></div>
<svg class="a" style="left:171.5px;top:479.5px" width="11" height="11" viewBox="0 0 11 11" fill="none"><path d="M5.5 0.5 V10.5 M0.5 5.5 H10.5" stroke="#bdbdbd" stroke-width="1.1"/></svg>
<div class="a" style="left:432.2px;top:481.2px;width:1.8px;height:1.7px;background:#e8e8e8"></div>
<div class="a" style="left:432.2px;top:484.6px;width:1.8px;height:1.7px;background:#e8e8e8"></div>
<div class="a" style="left:432.2px;top:487.8px;width:1.8px;height:1.7px;background:#e8e8e8"></div>
<svg class="a" style="left:450px;top:480.5px" width="7" height="8" viewBox="0 0 7 8" fill="none"><path d="M6.5 0.3 V7.7 L0.3 4 Z" fill="#9a9a9a"/></svg>
<div class="a" style="left:460.3px;top:481.6px;width:207px;height:6.6px;background:#9a9a9a;border-radius:3.3px"></div>
<svg class="a" style="left:693.5px;top:480.5px" width="7" height="9" viewBox="0 0 7 9" fill="none"><path d="M0.5 0.5 V8.5 L6.5 4.5 Z" fill="#9a9a9a"/></svg>
<div class="a" style="left:0px;top:497.5px;width:720px;height:16px;background:#151515"></div>
<div class="a" style="left:0px;top:497.6px;width:720px;height:1.2px;background:#2c2c2c"></div>
<div class="t" style="left:6.2px;top:504px;font-size:8.4px;color:#e0e0e0;font-weight:normal;">Edit</div>
<svg class="a" style="left:44px;top:502px" width="13" height="11" viewBox="0 0 13 11" fill="none"><path d="M0.7 10.5 V0.8 H11.5 V4" stroke="#d0d0d0" stroke-width="1.1"/><rect x="0.7" y="0.8" width="10.8" height="2" fill="#d0d0d0"/><path d="M2.2 5.2 H5 M2.2 8 H4.5" stroke="#d0d0d0" stroke-width="1"/><circle cx="8.3" cy="7.6" r="3" fill="#151515" stroke="#e0e0e0" stroke-width="1.1"/><circle cx="8.3" cy="7.6" r="1.2" fill="#e0e0e0"/></svg>
<svg class="a" style="left:69.5px;top:501.5px" width="13" height="12" viewBox="0 0 13 12" fill="none"><circle cx="6" cy="2.2" r="1.6" stroke="#e6e6e6" stroke-width="1.1"/><path d="M1.2 3.8 L4.2 5.3 H7.8 L10.8 3.8 M4.2 5.3 V8.3 L2.8 11.5 M7.8 5.3 V7.5" stroke="#e6e6e6" stroke-width="1.1" stroke-linejoin="round"/><path d="M6.3 9.3 L8.3 11.3 L12 7.6" stroke="#e6e6e6" stroke-width="1.1"/></svg>
<div class="t" style="left:84.5px;top:504px;font-size:8.5px;color:#e6e6e6;font-weight:normal;">Accessibility: Good to go</div>
<svg class="a" style="left:476.5px;top:501.5px" width="12" height="11" viewBox="0 0 12 11" fill="none"><path d="M0.7 0.7 H11.3 V10.3 H0.7 Z M0.7 3.9 H11.3 M0.7 7.1 H11.3 M4.2 0.7 V10.3 M7.8 0.7 V10.3" stroke="#8c8c8c" stroke-width="1"/></svg>
<svg class="a" style="left:510px;top:501.5px" width="12" height="11" viewBox="0 0 12 11" fill="none"><rect x="0.6" y="0.6" width="10.8" height="9.8" stroke="#8c8c8c" stroke-width="1"/><rect x="3.4" y="2.5" width="5.2" height="6" stroke="#8c8c8c" stroke-width="1"/><path d="M4.5 5.5 H7.5" stroke="#8c8c8c"/></svg>
<svg class="a" style="left:543px;top:501.5px" width="12" height="11" viewBox="0 0 12 11" fill="none"><rect x="0.6" y="0.6" width="10.8" height="9.8" stroke="#8c8c8c" stroke-width="1"/><path d="M3.5 0.6 V6 H8 V0.6" stroke="#8c8c8c" stroke-width="1"/></svg>
<div class="a" style="left:570px;top:506.6px;width:5.5px;height:1px;background:#6a6a6a"></div>
<div class="a" style="left:580px;top:506.5px;width:82px;height:1.2px;background:#d0d0d0"></div>
<div class="a" style="left:620.3px;top:504.6px;width:1.6px;height:5px;background:#d8d8d8"></div>
<svg class="a" style="left:665.5px;top:503.5px" width="7" height="7" viewBox="0 0 7 7" fill="none"><path d="M3.5 0.5 V6.5 M0.5 3.5 H6.5" stroke="#808080"/></svg>
<div class="t" style="left:682.5px;top:505px;font-size:8.2px;color:#7a7a7a;font-weight:normal;">100%</div>
</body></html>
